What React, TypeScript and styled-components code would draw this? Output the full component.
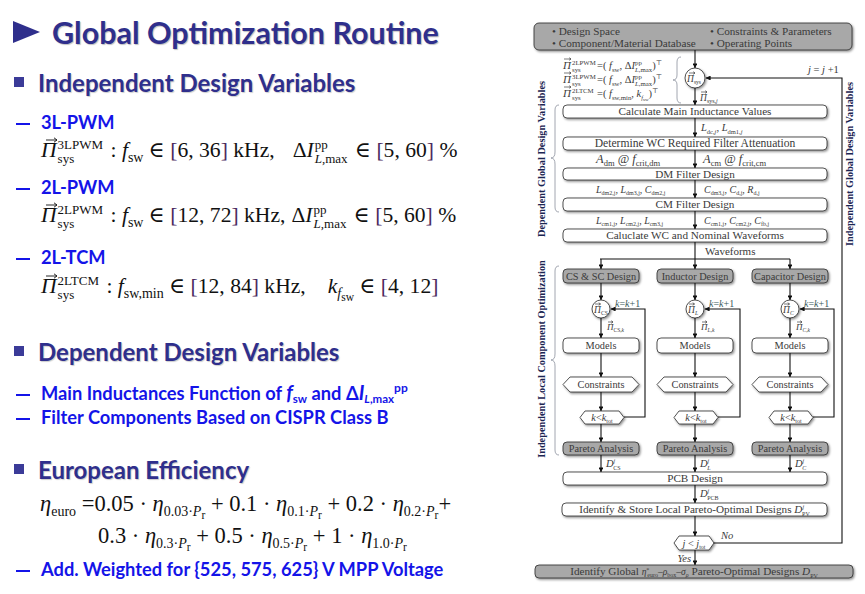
import React from "react";
import styled, { createGlobalStyle } from "styled-components";

const GlobalStyle = createGlobalStyle`
  html, body {
    margin: 0;
    padding: 0;
    background: #ffffff;
  }
  body {
    font-family: "Lato", "DejaVu Sans", sans-serif;
  }
`;

const NAVY = "#2f2f8c";
const BLUE = "#1414e8";

/* ---------- left column ---------- */

const Slide = styled.div`
  display: flex;
  width: 865px;
  height: 594px;
  overflow: hidden;
  background: #ffffff;
`;

const LeftCol = styled.div`
  width: 530px;
  padding-left: 13px;
  box-sizing: border-box;
  display: flex;
  flex-direction: column;
`;

const Title = styled.h1`
  margin: 12px 0 0;
  height: 40px;
  display: flex;
  align-items: center;
  gap: 12px;
  font-family: "Lato", sans-serif;
  font-weight: 700;
  font-size: 30.5px;
  color: ${NAVY};
  text-shadow: 1px 1px 1px rgba(0, 0, 0, 0.25);
  white-space: nowrap;
`;

const Triangle = styled.span`
  width: 0;
  height: 0;
  border-left: 27px solid ${NAVY};
  border-top: 11px solid transparent;
  border-bottom: 11px solid transparent;
`;

const Heading = styled.h2<{ $mt: number }>`
  margin: ${(p) => p.$mt}px 0 0;
  height: 30px;
  display: flex;
  align-items: center;
  gap: 14px;
  padding-left: 1px;
  font-family: "Lato", sans-serif;
  font-weight: 700;
  font-size: 24px;
  color: ${NAVY};
  text-shadow: 1px 1px 1px rgba(0, 0, 0, 0.2);
  white-space: nowrap;
`;

const Square = styled.span`
  width: 10px;
  height: 10px;
  background: #3b3b98;
  flex: none;
`;

const SubItem = styled.div<{ $mt: number }>`
  margin-top: ${(p) => p.$mt}px;
  height: 22px;
  line-height: 22px;
  font-family: "Lato", sans-serif;
  font-weight: 700;
  font-size: 18.3px;
  color: ${BLUE};
  white-space: nowrap;
  padding-left: 3px;
`;

const Dash = styled.span`
  display: inline-block;
  width: 14px;
  height: 2px;
  background: ${BLUE};
  vertical-align: middle;
  margin-right: 11px;
`;

const ItalicLetter = styled.i`
  font-style: italic;
  font-size: 20px;
`;

const SmallSub = styled.sub`
  font-size: 11.5px;
  line-height: 0;
  vertical-align: -3px;
  font-style: normal;
`;

const SmallSup = styled.sup`
  font-size: 12px;
  line-height: 0;
  vertical-align: 8px;
`;

const MathLine = styled.div<{ $mt: number; $indent: number; $size?: number }>`
  margin-top: ${(p) => p.$mt}px;
  height: 30px;
  line-height: 30px;
  padding-left: ${(p) => p.$indent}px;
  font-family: "Liberation Serif", "DejaVu Serif", serif;
  font-size: ${(p) => p.$size ?? 21.6}px;
  color: #111111;
  white-space: nowrap;
`;

const Var = styled.i`
  font-style: italic;
`;

const VecWrap = styled.i`
  position: relative;
  font-style: italic;
`;

const VecArrowSvg = styled.svg`
  position: absolute;
  left: 5px;
  top: -1px;
  width: 12px;
  height: 6px;
  overflow: visible;
`;

const Vec = ({ children }: { children: React.ReactNode }) => (
  <VecWrap>
    {children}
    <VecArrowSvg viewBox="0 0 12 6">
      <path d="M0 3 H11 M8 0.8 L11 3 L8 5.2" stroke="#111" strokeWidth={0.9} fill="none" />
    </VecArrowSvg>
  </VecWrap>
);

const Scripts = styled.span`
  display: inline-flex;
  flex-direction: column;
  font-size: 13px;
  line-height: 14px;
  vertical-align: 8px;
  margin: 0 2px 0 1px;
`;

const Sub = styled.sub`
  font-size: 14px;
  line-height: 0;
  vertical-align: -5px;
`;

const Bracket = styled.span`
  color: #4b2a5e;
`;

const Gap = styled.span<{ $w: number }>`
  display: inline-block;
  width: ${(p) => p.$w}px;
`;

/* ---------- diagram ---------- */

const Diagram = styled.svg`
  flex: none;
  font-family: "Liberation Serif", "DejaVu Serif", serif;
  fill: #3a3a3a;
`;

const SideLabel = styled.text`
  font-size: 10.3px;
  font-weight: 700;
  fill: #1b2552;
`;

type BoxProps = {
  x: number;
  y: number;
  w: number;
  h: number;
  gray?: boolean;
  size?: number;
  children: React.ReactNode;
};

const Box = ({ x, y, w, h, gray, size = 11.2, children }: BoxProps) => (
  <g>
    <rect
      x={x}
      y={y}
      width={w}
      height={h}
      rx={4}
      fill={gray ? "#a8a8a8" : "#ffffff"}
      stroke="#2a2a2a"
      strokeWidth={0.8}
      filter="url(#sh)"
    />
    <text x={x + w / 2} y={y + h / 2 + 3.7} textAnchor="middle" fontSize={size}>
      {children}
    </text>
  </g>
);

const Hex = ({ x, y, w, h, d = 7, size = 10.3, children }: BoxProps & { d?: number }) => (
  <g>
    <polygon
      points={`${x},${y + h / 2} ${x + d},${y} ${x + w - d},${y} ${x + w},${y + h / 2} ${x + w - d},${y + h} ${x + d},${y + h}`}
      fill="#ffffff"
      stroke="#2a2a2a"
      strokeWidth={0.8}
      filter="url(#sh)"
    />
    <text x={x + w / 2} y={y + h / 2 + 3.5} textAnchor="middle" fontSize={size}>
      {children}
    </text>
  </g>
);

const Arrow = ({ x1, y1, x2, y2 }: { x1: number; y1: number; x2: number; y2: number }) => (
  <line x1={x1} y1={y1} x2={x2} y2={y2} stroke="#111" strokeWidth={1.1} markerEnd="url(#ah)" />
);

const VecMark = ({ x, y, w = 6 }: { x: number; y: number; w?: number }) => (
  <path
    d={`M${x} ${y} h${w} m-1.8 -1.3 l1.8 1.3 l-1.8 1.3`}
    stroke="#222"
    strokeWidth={0.6}
    fill="none"
  />
);

const Node = ({ cx, cy, r, children }: { cx: number; cy: number; r: number; children: React.ReactNode }) => (
  <g>
    <circle cx={cx} cy={cy} r={r} fill="#fff" stroke="#2a2a2a" strokeWidth={0.8} filter="url(#sh)" />
    {children}
  </g>
);

const columns = [
  { cx: 601, design: "CS & SC Design", sym: "CS", it: false, fb: 645 },
  { cx: 695, design: "Inductor Design", sym: "L", it: true, fb: 740 },
  { cx: 790, design: "Capacitor Design", sym: "C", it: true, fb: 834 },
];

const vectors = [
  { y: 69, sup: "2LPWM", kind: "pwm" },
  { y: 83, sup: "3LPWM", kind: "pwm" },
  { y: 97, sup: "2LTCM", kind: "tcm" },
];

const FlowChart = () => (
  <Diagram width={335} height={594} viewBox="530 0 335 594">
    <defs>
      <filter id="sh" x="-10%" y="-30%" width="130%" height="180%">
        <feDropShadow dx="1.2" dy="1.4" stdDeviation="0.9" floodColor="#000" floodOpacity="0.45" />
      </filter>
      <marker id="ah" viewBox="0 0 6 6" refX="5.6" refY="3" markerWidth="4.5" markerHeight="4.5" orient="auto">
        <path d="M0,0 L6,3 L0,6 z" fill="#111" />
      </marker>
    </defs>

    {/* inputs */}
    <rect x={534} y={23} width={318} height={27} rx={5} fill="#a8a8a8" stroke="#2a2a2a" strokeWidth={0.8} filter="url(#sh)" />
    <text x={552} y={34.5} fontSize={11.2}>• Design Space</text>
    <text x={552} y={47} fontSize={11.2}>• Component/Material Database</text>
    <text x={710} y={34.5} fontSize={11.2}>• Constraints &amp; Parameters</text>
    <text x={710} y={47} fontSize={11.2}>• Operating Points</text>

    {/* system parameter vectors */}
    {vectors.map((r) => (
      <g key={r.sup}>
        <VecMark x={564} y={r.y - 10} w={7} />
        <text x={563} y={r.y} fontSize={11} fontStyle="italic">Π</text>
        <text x={572} y={r.y - 4} fontSize={6.8}>{r.sup}</text>
        <text x={572} y={r.y + 2.5} fontSize={6.8}>sys</text>
        <text x={597} y={r.y} fontSize={10.5}>
          <tspan>=( </tspan>
          <tspan fontStyle="italic">f</tspan>
          {r.kind === "pwm" ? (
            <>
              <tspan fontSize={6.8} baselineShift={-2.5}>sw</tspan>
              <tspan>, Δ</tspan>
              <tspan fontStyle="italic">I</tspan>
              <tspan fontSize={6.8} baselineShift={4}>pp</tspan>
              <tspan fontSize={6.8} dx={-6.8} baselineShift={-2.5} fontStyle="italic">L</tspan>
              <tspan fontSize={6.8} baselineShift={-2.5}>,max</tspan>
              <tspan>)</tspan>
            </>
          ) : (
            <>
              <tspan fontSize={6.8} baselineShift={-2.5}>sw,min</tspan>
              <tspan>, </tspan>
              <tspan fontStyle="italic">k</tspan>
              <tspan fontSize={6.3} baselineShift={-2.5} fontStyle="italic">f</tspan>
              <tspan fontSize={5} baselineShift={-3.5}>sw</tspan>
              <tspan>)</tspan>
            </>
          )}
          <tspan fontSize={6.8} baselineShift={4.5}>⊤</tspan>
        </text>
      </g>
    ))}
    <path d="M681 57 Q677 57 677 62 V75 Q677 80 673 80 Q677 80 677 85 V98 Q677 103 681 103" stroke="#8a8f9c" strokeWidth={0.8} fill="none" />

    <Arrow x1={695} y1={50} x2={695} y2={68} />
    <Node cx={695} cy={78} r={10}>
      <VecMark x={689} y={73} w={6} />
      <text x={687} y={82} fontSize={9.5}>
        <tspan fontStyle="italic">Π</tspan>
        <tspan fontSize={5.5} baselineShift={-2}>sys</tspan>
      </text>
    </Node>

    {/* outer loop */}
    <polyline points="713,543 842,543 842,78 706,78" fill="none" stroke="#111" strokeWidth={1.1} markerEnd="url(#ah)" />
    <text x={808} y={73} fontSize={10.5}>
      <tspan fontStyle="italic">j</tspan>
      <tspan> = </tspan>
      <tspan fontStyle="italic">j</tspan>
      <tspan> +1</tspan>
    </text>

    <Arrow x1={695} y1={88} x2={695} y2={105} />
    <VecMark x={701} y={92} w={6} />
    <text x={700} y={101} fontSize={9.5}>
      <tspan fontStyle="italic">Π</tspan>
      <tspan fontSize={6} baselineShift={-2}>sys,</tspan>
      <tspan fontSize={6} baselineShift={-2} fontStyle="italic">j</tspan>
    </text>

    <Box x={563} y={105} w={264} h={13}>Calculate Main Inductance Values</Box>
    <Arrow x1={695} y1={118} x2={695} y2={137} />
    <text x={701} y={131} fontSize={10.5}>
      <tspan fontStyle="italic">L</tspan>
      <tspan fontSize={6.5} baselineShift={-2.5}>dc,</tspan>
      <tspan fontSize={6.5} baselineShift={-2.5} fontStyle="italic">j</tspan>
      <tspan>,  </tspan>
      <tspan fontStyle="italic">L</tspan>
      <tspan fontSize={6.5} baselineShift={-2.5}>dm1,</tspan>
      <tspan fontSize={6.5} baselineShift={-2.5} fontStyle="italic">j</tspan>
    </text>

    <Box x={563} y={137} w={264} h={13} size={11.6}>Determine WC Required Filter Attenuation</Box>
    <Arrow x1={695} y1={150} x2={695} y2={168} />
    <text x={596} y={163} fontSize={12.5}>
      <tspan fontStyle="italic">A</tspan>
      <tspan fontSize={8.5} baselineShift={-2.5}>dm</tspan>
      <tspan> @ </tspan>
      <tspan fontStyle="italic">f</tspan>
      <tspan fontSize={8.5} baselineShift={-2.5}>crit,dm</tspan>
    </text>
    <text x={703} y={163} fontSize={12.5}>
      <tspan fontStyle="italic">A</tspan>
      <tspan fontSize={8.5} baselineShift={-2.5}>cm</tspan>
      <tspan> @ </tspan>
      <tspan fontStyle="italic">f</tspan>
      <tspan fontSize={8.5} baselineShift={-2.5}>crit,cm</tspan>
    </text>

    <Box x={563} y={168} w={264} h={12}>DM Filter Design</Box>
    <Arrow x1={695} y1={180} x2={695} y2={198} />
    <text x={596} y={193} fontSize={10}>
      <tspan fontStyle="italic">L</tspan>
      <tspan fontSize={6} baselineShift={-2}>dm2,j</tspan>
      <tspan>, </tspan>
      <tspan fontStyle="italic">L</tspan>
      <tspan fontSize={6} baselineShift={-2}>dm3,j</tspan>
      <tspan>, </tspan>
      <tspan fontStyle="italic">C</tspan>
      <tspan fontSize={6} baselineShift={-2}>dm2,j</tspan>
    </text>
    <text x={704} y={193} fontSize={10}>
      <tspan fontStyle="italic">C</tspan>
      <tspan fontSize={6} baselineShift={-2}>dm3,j</tspan>
      <tspan>, </tspan>
      <tspan fontStyle="italic">C</tspan>
      <tspan fontSize={6} baselineShift={-2}>d,j</tspan>
      <tspan>, </tspan>
      <tspan fontStyle="italic">R</tspan>
      <tspan fontSize={6} baselineShift={-2}>d,j</tspan>
    </text>

    <Box x={563} y={198} w={264} h={13}>CM Filter Design</Box>
    <Arrow x1={695} y1={211} x2={695} y2={229} />
    <text x={596} y={224} fontSize={10}>
      <tspan fontStyle="italic">L</tspan>
      <tspan fontSize={6} baselineShift={-2}>cm1,j</tspan>
      <tspan>, </tspan>
      <tspan fontStyle="italic">L</tspan>
      <tspan fontSize={6} baselineShift={-2}>cm2,j</tspan>
      <tspan>, </tspan>
      <tspan fontStyle="italic">L</tspan>
      <tspan fontSize={6} baselineShift={-2}>cm3,j</tspan>
    </text>
    <text x={704} y={224} fontSize={10}>
      <tspan fontStyle="italic">C</tspan>
      <tspan fontSize={6} baselineShift={-2}>cm1,j</tspan>
      <tspan>, </tspan>
      <tspan fontStyle="italic">C</tspan>
      <tspan fontSize={6} baselineShift={-2}>cm2,j</tspan>
      <tspan>,  </tspan>
      <tspan fontStyle="italic">C</tspan>
      <tspan fontSize={6} baselineShift={-2}>fb,j</tspan>
    </text>

    <Box x={563} y={229} w={264} h={13}>Caluclate WC and Nominal Waveforms</Box>
    <line x1={695} y1={242} x2={695} y2={259} stroke="#111" strokeWidth={1.1} />
    <text x={705} y={255} fontSize={11}>Waveforms</text>
    <line x1={600} y1={259} x2={790} y2={259} stroke="#111" strokeWidth={1.1} />

    {columns.map((c) => (
      <g key={c.sym}>
        <Arrow x1={c.cx} y1={259} x2={c.cx} y2={269} />
        <Box x={c.cx - 38} y={269} w={76} h={14} gray size={10.3}>{c.design}</Box>
        <Arrow x1={c.cx} y1={283} x2={c.cx} y2={300} />
        <Node cx={c.cx} cy={309} r={9}>
          <VecMark x={c.cx - 6} y={304} w={5.5} />
          <text x={c.cx - 7} y={313} fontSize={9.5}>
            <tspan fontStyle="italic">Π</tspan>
            <tspan fontSize={5.8} baselineShift={-2} fontStyle={c.it ? "italic" : "normal"}>{c.sym}</tspan>
          </text>
        </Node>
        <text x={c.cx + 14} y={307} fontSize={10} fill="#3a5a5c">
          <tspan fontStyle="italic">k</tspan>
          <tspan>=</tspan>
          <tspan fontStyle="italic">k</tspan>
          <tspan>+1</tspan>
        </text>
        <polyline
          points={`${c.cx + 23},417 ${c.fb},417 ${c.fb},309 ${c.cx + 10},309`}
          fill="none"
          stroke="#111"
          strokeWidth={1.1}
          markerEnd="url(#ah)"
        />
        <Arrow x1={c.cx} y1={318} x2={c.cx} y2={338} />
        <VecMark x={c.cx + 7} y={322} w={5} />
        <text x={c.cx + 6} y={330} fontSize={9}>
          <tspan fontStyle="italic">Π</tspan>
          <tspan fontSize={5.5} baselineShift={-2} fontStyle={c.it ? "italic" : "normal"}>{c.sym},</tspan>
          <tspan fontSize={5.5} baselineShift={-2} fontStyle="italic">k</tspan>
        </text>
        <Box x={c.cx - 38} y={338} w={76} h={15} size={10.3}>Models</Box>
        <Arrow x1={c.cx} y1={353} x2={c.cx} y2={377} />
        <Hex x={c.cx - 38} y={377} w={76} h={15}>Constraints</Hex>
        <Arrow x1={c.cx} y1={392} x2={c.cx} y2={411} />
        <Hex x={c.cx - 21} y={411} w={44} h={13} d={5}>
          <tspan fontStyle="italic">k</tspan>
          <tspan>&lt;</tspan>
          <tspan fontStyle="italic">k</tspan>
          <tspan fontSize={6} baselineShift={-2}>tot</tspan>
        </Hex>
        <Arrow x1={c.cx} y1={424} x2={c.cx} y2={442} />
        <Box x={c.cx - 38} y={442} w={76} h={13} gray size={10.3}>Pareto Analysis</Box>
        <Arrow x1={c.cx} y1={455} x2={c.cx} y2={472} />
        <text x={c.cx + 5} y={467} fontSize={10.5}>
          <tspan fontStyle="italic">D</tspan>
          <tspan fontSize={6} baselineShift={4} fontStyle="italic">j</tspan>
          <tspan fontSize={6} dx={-2} baselineShift={-2.5} fontStyle={c.it ? "italic" : "normal"}>{c.sym}</tspan>
        </text>
      </g>
    ))}

    <Box x={563} y={472} w={264} h={13}>PCB Design</Box>
    <Arrow x1={695} y1={485} x2={695} y2={503} />
    <text x={700} y={497} fontSize={10.5}>
      <tspan fontStyle="italic">D</tspan>
      <tspan fontSize={6} baselineShift={4} fontStyle="italic">j</tspan>
      <tspan fontSize={6} dx={-2} baselineShift={-2.5}>PCB</tspan>
    </text>

    <Box x={562} y={503} w={265} h={13}>
      <tspan>Identify &amp; Store Local Pareto-Optimal Designs </tspan>
      <tspan fontStyle="italic">D</tspan>
      <tspan fontSize={6} baselineShift={4} fontStyle="italic">j</tspan>
      <tspan fontSize={6} dx={-2} baselineShift={-2.5}>PV</tspan>
    </Box>
    <Arrow x1={695} y1={516} x2={695} y2={536} />
    <Hex x={674} y={536} w={40} h={14} d={5}>
      <tspan fontStyle="italic">j</tspan>
      <tspan> &lt; </tspan>
      <tspan fontStyle="italic">j</tspan>
      <tspan fontSize={6} baselineShift={-2}>tot</tspan>
    </Hex>
    <text x={721} y={539} fontSize={10.5} fontStyle="italic">No</text>
    <Arrow x1={695} y1={550} x2={695} y2={565} />
    <text x={691} y={562} fontSize={10.5} fontStyle="italic" textAnchor="end">Yes</text>

    <Box x={535} y={565} w={318} h={13} gray>
      <tspan>Identify Global  </tspan>
      <tspan fontStyle="italic" fontSize={9.5}>η</tspan>
      <tspan fontSize={6} baselineShift={3}>*</tspan>
      <tspan fontSize={6} dx={-2} baselineShift={-2}>euro</tspan>
      <tspan fontSize={9.5}>–</tspan>
      <tspan fontStyle="italic" fontSize={9.5}>ρ</tspan>
      <tspan fontSize={6} baselineShift={-2}>box</tspan>
      <tspan fontSize={9.5}>–</tspan>
      <tspan fontStyle="italic" fontSize={9.5}>σ</tspan>
      <tspan fontSize={6} baselineShift={-2} fontStyle="italic">ρ</tspan>
      <tspan> Pareto-Optimal Designs </tspan>
      <tspan fontStyle="italic">D</tspan>
      <tspan fontSize={6} baselineShift={-2.5}>PV</tspan>
    </Box>

    {/* side labels */}
    <path d="M559 105 Q555 105 555 110 V152 Q555 158 551 158 Q555 158 555 164 V207 Q555 212 559 212" stroke="#8a8f9c" strokeWidth={0.8} fill="none" />
    <path d="M559 266 Q555 266 555 271 V354 Q555 360 551 360 Q555 360 555 366 V450 Q555 455 559 455" stroke="#8a8f9c" strokeWidth={0.8} fill="none" />
    <SideLabel x={543} y={159} transform="rotate(-90 543 159)" textAnchor="middle" dominantBaseline="middle">
      Dependent Global Design Variables
    </SideLabel>
    <SideLabel x={543} y={359} transform="rotate(-90 543 359)" textAnchor="middle" dominantBaseline="middle">
      Independent Local Component Optimization
    </SideLabel>
    <SideLabel x={851} y={164} transform="rotate(-90 851 164)" textAnchor="middle" dominantBaseline="middle">
      Independent Global Design Variables
    </SideLabel>
  </Diagram>
);

const App = () => (
  <>
    <GlobalStyle />
    <Slide>
      <LeftCol>
        <Title>
          <Triangle />
          Global Optimization Routine
        </Title>

        <Heading $mt={15}>
          <Square />
          Independent Design Variables
        </Heading>

        <SubItem $mt={14}>
          <Dash />
          3L-PWM
        </SubItem>
        <MathLine $mt={2} $indent={28}>
          <Vec>Π</Vec>
          <Scripts>
            <span>3LPWM</span>
            <span>sys</span>
          </Scripts>
          {" : "}
          <Var>f</Var>
          <Sub>sw</Sub> ∈ <Bracket>[</Bracket>6, 36<Bracket>]</Bracket> kHz,
          <Gap $w={18} />
          Δ<Var>I</Var>
          <Scripts>
            <span>pp</span>
            <span>
              <Var>L</Var>,max
            </span>
          </Scripts>{" "}
          ∈ <Bracket>[</Bracket>5, 60<Bracket>]</Bracket> %
        </MathLine>

        <SubItem $mt={11}>
          <Dash />
          2L-PWM
        </SubItem>
        <MathLine $mt={2} $indent={28}>
          <Vec>Π</Vec>
          <Scripts>
            <span>2LPWM</span>
            <span>sys</span>
          </Scripts>
          {" : "}
          <Var>f</Var>
          <Sub>sw</Sub> ∈ <Bracket>[</Bracket>12, 72<Bracket>]</Bracket> kHz,
          <Gap $w={6} />
          Δ<Var>I</Var>
          <Scripts>
            <span>pp</span>
            <span>
              <Var>L</Var>,max
            </span>
          </Scripts>{" "}
          ∈ <Bracket>[</Bracket>5, 60<Bracket>]</Bracket> %
        </MathLine>

        <SubItem $mt={16}>
          <Dash />
          2L-TCM
        </SubItem>
        <MathLine $mt={3} $indent={28}>
          <Vec>Π</Vec>
          <Scripts>
            <span>2LTCM</span>
            <span>sys</span>
          </Scripts>
          {" : "}
          <Var>f</Var>
          <Sub>sw,min</Sub> ∈ <Bracket>[</Bracket>12, 84<Bracket>]</Bracket> kHz,
          <Gap $w={22} />
          <Var>k</Var>
          <Sub>
            <Var>f</Var>
            <SmallSub>sw</SmallSub>
          </Sub>{" "}
          ∈ <Bracket>[</Bracket>4, 12<Bracket>]</Bracket>
        </MathLine>

        <Heading $mt={35}>
          <Square />
          Dependent Design Variables
        </Heading>

        <SubItem $mt={15}>
          <Dash />
          Main Inductances Function of <ItalicLetter>f</ItalicLetter>
          <SmallSub>sw</SmallSub> and Δ<ItalicLetter>I</ItalicLetter>
          <SmallSub>
            <i>L</i>,max
          </SmallSub>
          <SmallSup>pp</SmallSup>
        </SubItem>
        <SubItem $mt={3}>
          <Dash />
          Filter Components Based on CISPR Class B
        </SubItem>

        <Heading $mt={26}>
          <Square />
          European Efficiency
        </Heading>

        <MathLine $mt={5} $indent={27} $size={22.5}>
          <Var>η</Var>
          <Sub>euro</Sub> =0.05 · <Var>η</Var>
          <Sub>
            0.03·<Var>P</Var>
            <SmallSub>r</SmallSub>
          </Sub>{" "}
          + 0.1 · <Var>η</Var>
          <Sub>
            0.1·<Var>P</Var>
            <SmallSub>r</SmallSub>
          </Sub>{" "}
          + 0.2 · <Var>η</Var>
          <Sub>
            0.2·<Var>P</Var>
            <SmallSub>r</SmallSub>
          </Sub>
          +
        </MathLine>
        <MathLine $mt={2} $indent={85} $size={22.5}>
          0.3 · <Var>η</Var>
          <Sub>
            0.3·<Var>P</Var>
            <SmallSub>r</SmallSub>
          </Sub>{" "}
          + 0.5 · <Var>η</Var>
          <Sub>
            0.5·<Var>P</Var>
            <SmallSub>r</SmallSub>
          </Sub>{" "}
          + 1 · <Var>η</Var>
          <Sub>
            1.0·<Var>P</Var>
            <SmallSub>r</SmallSub>
          </Sub>
        </MathLine>

        <SubItem $mt={7}>
          <Dash />
          Add. Weighted for {"{525, 575, 625}"} V MPP Voltage
        </SubItem>
      </LeftCol>
      <FlowChart />
    </Slide>
  </>
);

export default App;
